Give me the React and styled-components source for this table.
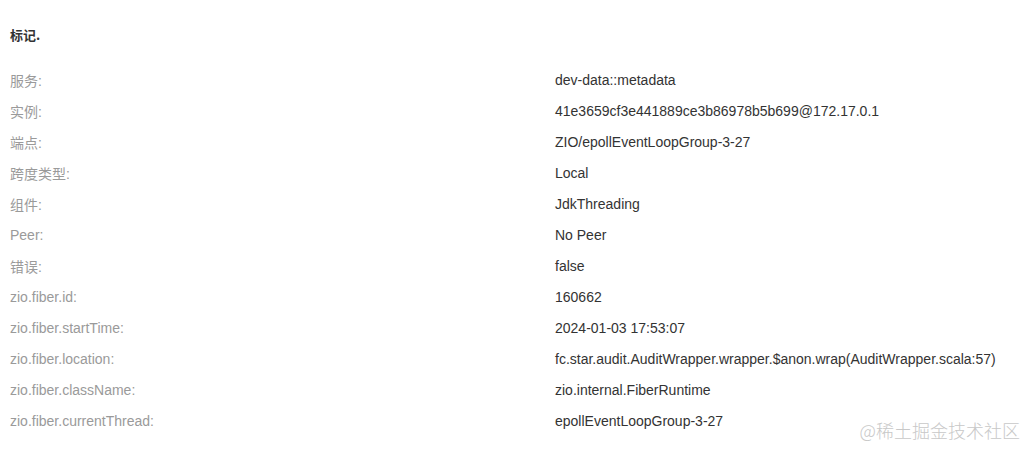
import React from "react";
import styled, { createGlobalStyle } from "styled-components";

const GlobalStyle = createGlobalStyle`
  html, body {
    margin: 0;
    padding: 0;
    background: #ffffff;
  }
  body {
    font-family: "Liberation Sans", Arial, "Noto Sans CJK SC", sans-serif;
  }
`;

const tags = [
    ["服务:", "dev-data::metadata"],
    ["实例:", "41e3659cf3e441889ce3b86978b5b699@172.17.0.1"],
    ["端点:", "ZIO/epollEventLoopGroup-3-27"],
    ["跨度类型:", "Local"],
    ["组件:", "JdkThreading"],
    ["Peer:", "No Peer"],
    ["错误:", "false"],
    ["zio.fiber.id:", "160662"],
    ["zio.fiber.startTime:", "2024-01-03 17:53:07"],
    ["zio.fiber.location:", "fc.star.audit.AuditWrapper.wrapper.$anon.wrap(AuditWrapper.scala:57)"],
    ["zio.fiber.className:", "zio.internal.FiberRuntime"],
    ["zio.fiber.currentThread:", "epollEventLoopGroup-3-27"],
];

export default function App() {
    return (
        <Page>
            <GlobalStyle />
            <Title>标记.</Title>
            <TagList>
                {tags.map(([label, value]) => (
                    <Row key={label}>
                        <Label>{label}</Label>
                        <Value>{value}</Value>
                    </Row>
                ))}
            </TagList>
            <Watermark>@稀土掘金技术社区</Watermark>
        </Page>
    );
}

const Page = styled.div`
    position: relative;
    width: 1027px;
    height: 449px;
    padding: 26px 0 0 10px;
    box-sizing: border-box;
    overflow: hidden;
`

const Title = styled.h3`
    margin: 0;
    font-size: 13px;
    line-height: 18px;
    font-weight: 700;
    color: #333;
    font-family: "Noto Sans CJK SC", "Liberation Sans", sans-serif;
`

const TagList = styled.div`
    display: flex;
    flex-direction: column;
    margin-top: 20px;
`

const Row = styled.div`
    display: grid;
    grid-template-columns: 545px 1fr;
    height: 31px;
    align-items: center;
    font-size: 14px;
`

const Label = styled.span`
    color: #9a9a9a;
    font-family: "Liberation Sans", "Noto Sans CJK SC", sans-serif;
`

const Value = styled.span`
    color: #333;
    white-space: nowrap;
`

const Watermark = styled.div`
    position: absolute;
    right: 7px;
    bottom: 6px;
    font-size: 18px;
    color: #c8c8c8;
    font-family: "Noto Sans CJK SC", sans-serif;
    font-weight: 300;
`
